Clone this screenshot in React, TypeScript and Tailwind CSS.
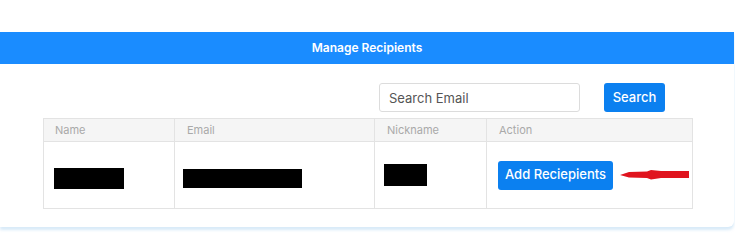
export default function App() {
  return (
    <div className="w-[735px] h-[250px] bg-white pt-[32px] font-['Inter','Liberation_Sans',sans-serif]">
      {/* Card */}
      <div className="w-[734px] h-[195px] rounded-br-[6px] bg-white shadow-[0_3px_3px_rgba(200,225,245,0.7),-1px_0_0_#eef2f6] overflow-hidden">
        <div className="h-[32px] bg-[#1a8cff] flex items-center justify-center">
          <span className="text-white text-[12px] font-semibold">Manage Recipients</span>
        </div>

        {/* Search */}
        <div className="flex items-center pt-[19px] pl-[379px]">
          <input
            placeholder="Search Email"
            className="w-[201px] h-[29px] rounded-[3px] border border-[#dcdcdc] px-[9px] text-[13px] text-[#444] placeholder:text-[#555] outline-none"
          />
          <button className="ml-[24px] w-[61px] h-[29px] rounded-[3px] bg-[#0b80f0] text-white text-[13px] font-medium">
            Search
          </button>
        </div>

        {/* Table */}
        <table className="ml-[43px] mt-[6px] w-[650px] border-collapse text-[11px]">
          <thead>
            <tr className="bg-[#f5f5f5] h-[23px] text-left text-[#a9a9a9]">
              <th className="w-[131px] border border-[#e3e3e3] pl-[11px] font-normal">Name</th>
              <th className="w-[200px] border border-[#e3e3e3] pl-[12px] font-normal">Email</th>
              <th className="w-[112px] border border-[#e3e3e3] pl-[12px] font-normal">Nickname</th>
              <th className="border border-[#e3e3e3] pl-[12px] font-normal">Action</th>
            </tr>
          </thead>
          <tbody>
            <tr className="h-[67px]">
              <td className="border border-[#e3e3e3] pl-[10px] pt-[6px]">
                <div className="w-[70px] h-[21px] bg-black" />
              </td>
              <td className="border border-[#e3e3e3] pl-[8px] pt-[6px]">
                <div className="w-[119px] h-[19px] bg-black" />
              </td>
              <td className="border border-[#e3e3e3] pl-[9px]">
                <div className="w-[43px] h-[22px] bg-black" />
              </td>
              <td className="border border-[#e3e3e3] pl-[11px]">
                <div className="flex items-center">
                  <button className="w-[115px] h-[29px] rounded-[3px] bg-[#0b80f0] text-white text-[13px] font-medium">
                    Add Reciepients
                  </button>
                  <svg width="72" height="12" viewBox="0 0 72 12" className="ml-[6px]">
                    <polygon
                      points="1,6 10,3 28,2.5 32,1 42,2 70,2 70,9 42,9 32,10.5 28,9 10,8.5"
                      fill="#e0141e"
                    />
                  </svg>
                </div>
              </td>
            </tr>
          </tbody>
        </table>
      </div>
    </div>
  );
}
